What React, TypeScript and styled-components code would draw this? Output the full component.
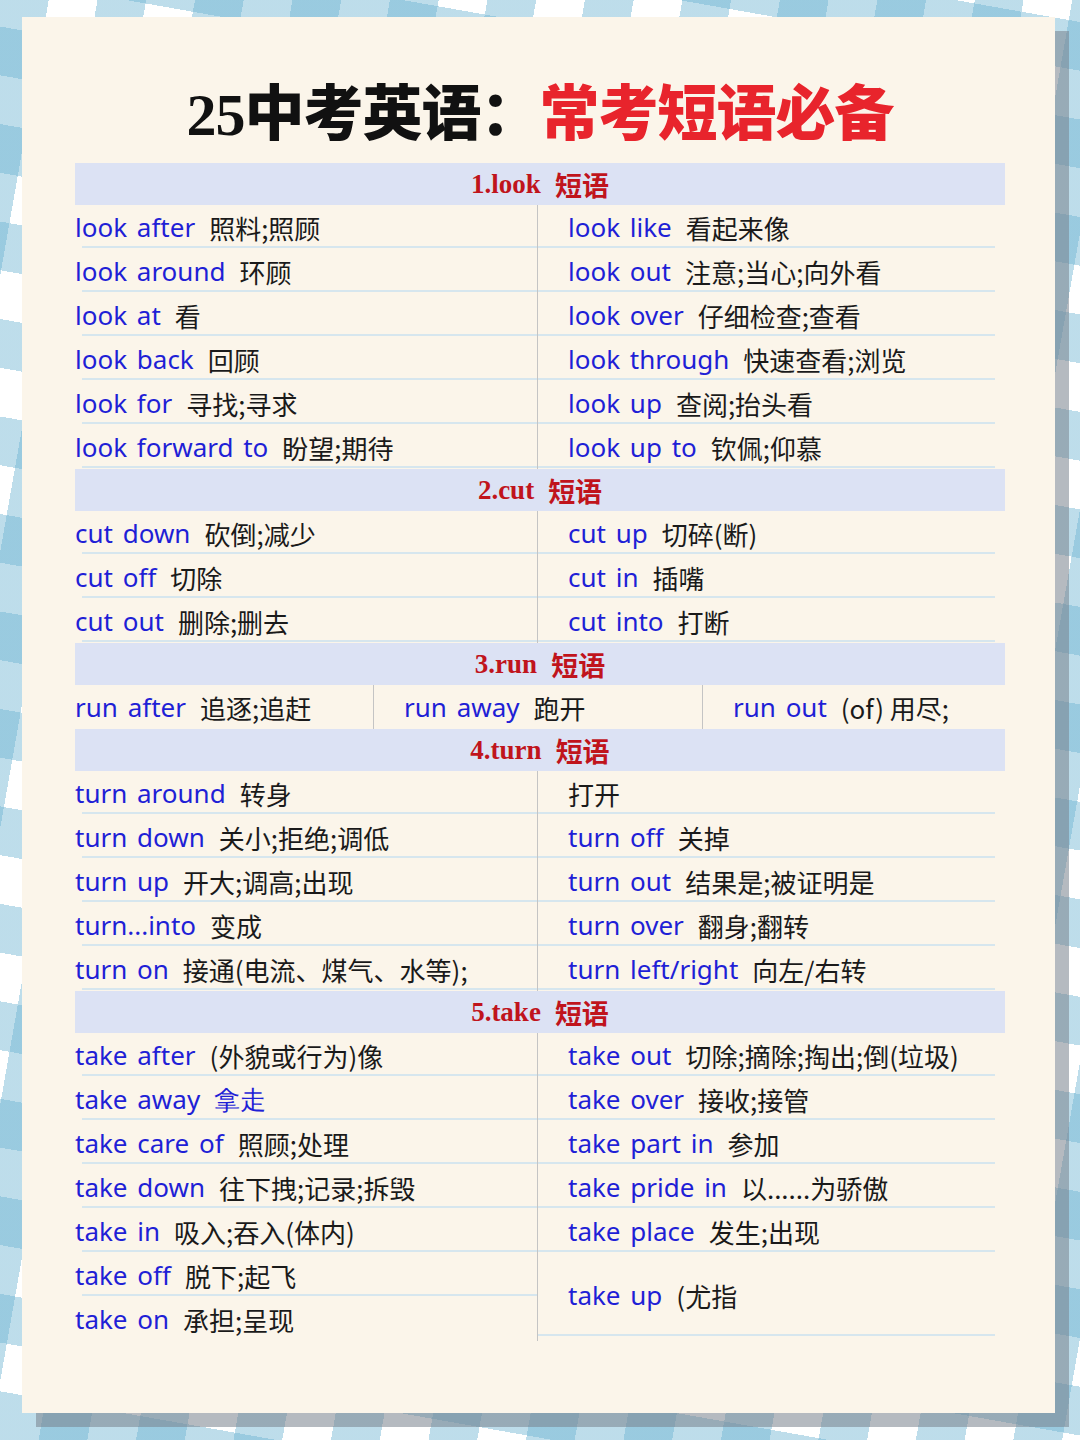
import React from "react";
import styled, { createGlobalStyle } from "styled-components";

const Global = createGlobalStyle`
  html, body { margin: 0; padding: 0; }
  body {
    width: 1080px; height: 1440px; overflow: hidden;
    background-color: #ffffff;
    background-image:
      repeating-linear-gradient(100deg, rgba(110,180,210,0.45) 0 48px, transparent 48px 96px),
      repeating-linear-gradient(10deg, rgba(110,180,210,0.45) 0 48px, transparent 48px 96px);
  }
`;

const Card = styled.div`
  position: relative;
  margin: 17px 25px 27px 22px;
  height: 1396px;
  box-sizing: border-box;
  background: #fbf5ea;
  box-shadow: 14px 14px 0 rgba(120,130,140,0.55);
  padding: 58px 50px 0 53px;
  font-family: "Noto Sans CJK SC", "Noto Sans", sans-serif;
`;

const Title = styled.h1`
  margin: 0 0 8px 0;
  text-align: center;
  font-family: "Liberation Serif", "Noto Sans CJK SC", serif;
  font-weight: 900;
  font-size: 60px;
  line-height: 80px;
  color: #111;
  letter-spacing: -1px;
`;
const Red = styled.span` color: #e8242c; `;

const Header = styled.div`
  height: 42px;
  background: #dce2f4;
  display: flex; align-items: center; justify-content: center;
  font-family: "Liberation Serif", "Noto Sans CJK SC", serif;
  font-weight: 700; font-size: 27px; color: #c0141c;
  gap: 14px;
`;

const Section = styled.div<{ $cols: number }>`
  display: grid;
  grid-template-columns: ${p => p.$cols === 3 ? "299px 329px 302px" : "463px 467px"};
`;
const Col = styled.div<{ $line?: boolean }>`
  display: flex; flex-direction: column;
  border-right: ${p => p.$line ? "1px solid #c4c4c4" : "none"};
`;
const Cell = styled.div<{ $pad: number; $h?: number; $noLine?: boolean }>`
  position: relative;
  height: ${p => p.$h ?? 44}px;
  display: flex; align-items: center;
  padding-left: ${p => p.$pad}px;
  font-size: 26px; color: #1a1a1a; white-space: nowrap;
  &::after {
    content: ""; position: absolute; left: ${p => p.$pad ? 0 : 7}px; right: ${p => p.$pad ? 10 : 0}px; bottom: 1px;
    height: 2px; background: ${p => p.$noLine ? "transparent" : "#d6e6ee"};
  }
`;
const En = styled.span`
  color: #1f1fd6; font-family: "Noto Sans", sans-serif; font-size: 26px;
  margin-right: 14px; word-spacing: 3px;
`;

type Item = [string, string];
const look: Item[][] = [
  [["look after","照料;照顾"],["look around","环顾"],["look at","看"],["look back","回顾"],["look for","寻找;寻求"],["look forward to","盼望;期待"]],
  [["look like","看起来像"],["look out","注意;当心;向外看"],["look over","仔细检查;查看"],["look through","快速查看;浏览"],["look up","查阅;抬头看"],["look up to","钦佩;仰慕"]],
];
const cut: Item[][] = [
  [["cut down","砍倒;减少"],["cut off","切除"],["cut out","删除;删去"]],
  [["cut up","切碎(断)"],["cut in","插嘴"],["cut into","打断"]],
];
const turn: Item[][] = [
  [["turn around","转身"],["turn down","关小;拒绝;调低"],["turn up","开大;调高;出现"],["turn...into","变成"],["turn on","接通(电流、煤气、水等);"]],
  [["","打开"],["turn off","关掉"],["turn out","结果是;被证明是"],["turn over","翻身;翻转"],["turn left/right","向左/右转"]],
];
const takeL: Item[] = [["take after","(外貌或行为)像"],["take away",""],["take care of","照顾;处理"],["take down","往下拽;记录;拆毁"],["take in","吸入;吞入(体内)"],["take off","脱下;起飞"],["take on","承担;呈现"]];
const takeR: Item[] = [["take out","切除;摘除;掏出;倒(垃圾)"],["take over","接收;接管"],["take part in","参加"],["take pride in","以......为骄傲"],["take place","发生;出现"]];

const Row = ({ it, pad, h, noLine }: { it: Item; pad: number; h?: number; noLine?: boolean }) => (
  <Cell $pad={pad} $h={h} $noLine={noLine}>
    {it[0] && <En>{it[0]}</En>}
    {it[0] === "take away" ? <En as="span">拿走</En> : it[1]}
  </Cell>
);

const Two = ({ data }: { data: Item[][] }) => (
  <Section $cols={2}>
    <Col $line>{data[0].map((it, i) => <Row key={i} it={it} pad={0} />)}</Col>
    <Col>{data[1].map((it, i) => <Row key={i} it={it} pad={30} />)}</Col>
  </Section>
);

const H = ({ n }: { n: string }) => (
  <Header><span>{n}</span><span>短语</span></Header>
);

export default function App() {
  return (
    <>
      <Global />
      <Card>
        <Title>25中考英语：<Red>常考短语必备</Red></Title>
        <H n="1.look" />
        <Two data={look} />
        <H n="2.cut" />
        <Two data={cut} />
        <H n="3.run" />
        <Section $cols={3}>
          <Col $line><Row it={["run after","追逐;追赶"]} pad={0} noLine /></Col>
          <Col $line><Row it={["run away","跑开"]} pad={30} noLine /></Col>
          <Col><Row it={["run out","(of)  用尽;"]} pad={30} noLine /></Col>
        </Section>
        <H n="4.turn" />
        <Two data={turn} />
        <H n="5.take" />
        <Section $cols={2}>
          <Col $line>{takeL.map((it, i) => <Row key={i} it={it} pad={0} noLine={i === takeL.length - 1} />)}</Col>
          <Col>
            {takeR.map((it, i) => <Row key={i} it={it} pad={30} />)}
            <Row it={["take up","(尤指"]} pad={30} h={84} />
          </Col>
        </Section>
      </Card>
    </>
  );
}
